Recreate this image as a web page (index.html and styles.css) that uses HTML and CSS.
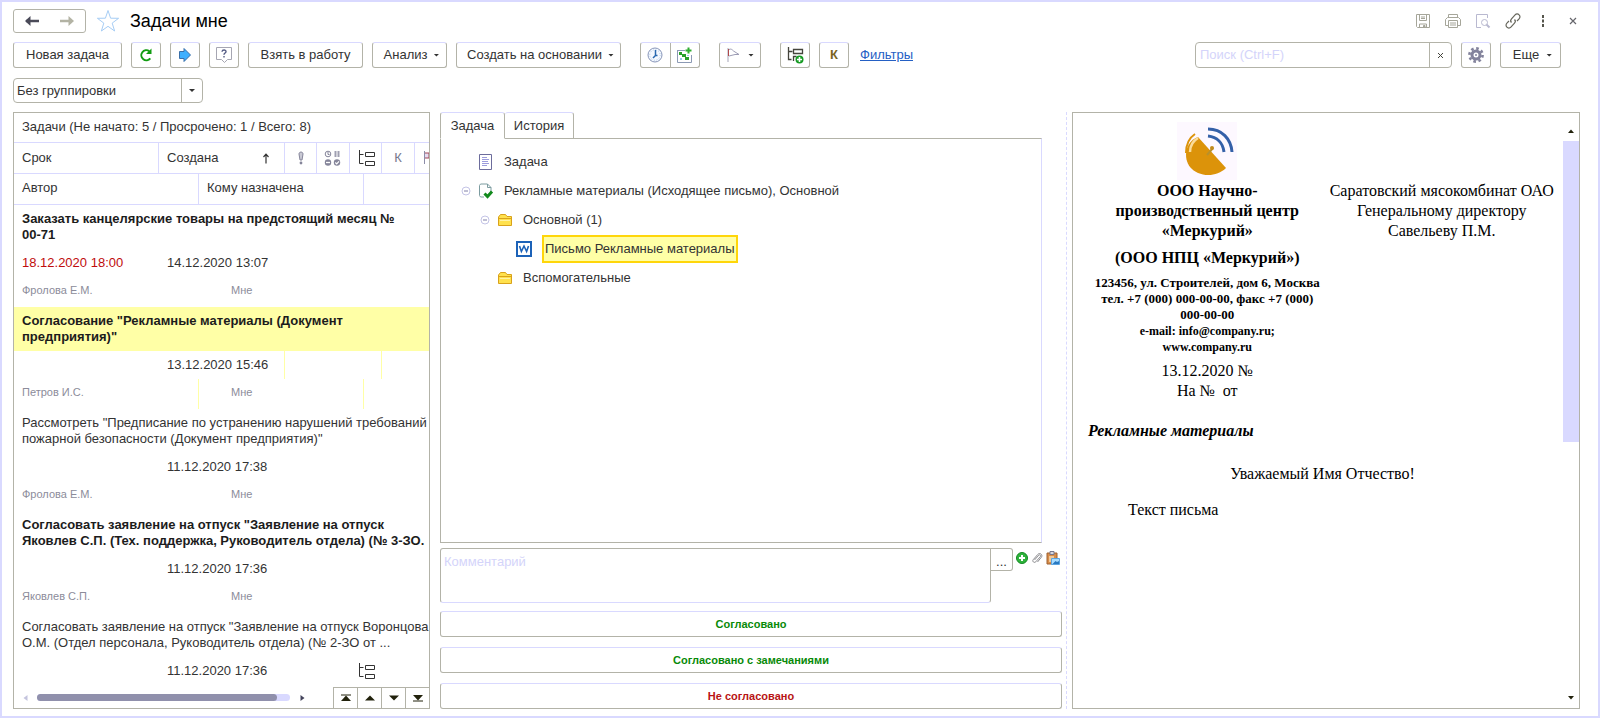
FILE: index.html
```html
<!DOCTYPE html>
<html lang="ru">
<head>
<meta charset="utf-8">
<title>Задачи мне</title>
<link rel="stylesheet" href="styles.css">
</head>
<body>
<svg class="defs" aria-hidden="true">
  <symbol id="i-tree" viewBox="0 0 18 18"><path d="M2.500 1v13.500h4M2.500 5.500h4" fill="none" stroke="currentColor"/><path d="M8.500 3.500h9v4h-9zM8.500 12.500h9v4h-9z" fill="none" stroke="currentColor"/></symbol>
  <symbol id="i-folder" viewBox="0 0 16 16"><path d="M1.500 13.500V5l2-2.500h5L10 4.500h4.500v9z" fill="#ffe14d" stroke="#d9a21b"/><path d="M2 6.500h12" stroke="#d9a21b"/><path d="M3 8.500h10" stroke="#fff3a6"/></symbol>
  <symbol id="i-minus" viewBox="0 0 10 10"><circle cx="5" cy="5" r="4" fill="#fff" stroke="#c4c4e6"/><path d="M3 5h4" stroke="#8080a8"/></symbol>
</svg>
<div class="window">
  <header class="titlebar">
    <div class="nav">
      <button type="button" aria-label="Назад"><svg width="16" height="12" viewBox="0 0 16 12"><path d="M2 6h13" stroke="#4a4a58" stroke-width="2.500"/><path d="M6.500 1 1 6l5.500 5z" fill="#4a4a58"/></svg></button>
      <button type="button" aria-label="Вперед"><svg width="16" height="12" viewBox="0 0 16 12"><path d="M1 6h12" stroke="#b3b3a4" stroke-width="2.500"/><path d="M9.500 1 15 6l-5.500 5z" fill="#b3b3a4"/></svg></button>
    </div>
    <button type="button" class="plain" aria-label="В избранное"><svg width="24" height="24" viewBox="0 0 24 24"><path d="m12 1.500 2.600 7.700 8 .1-6.400 4.800 2.400 7.900-6.600-4.700L5.400 22l2.400-7.900-6.400-4.800 8-.1z" fill="#fff" stroke="#a6cdf5"/></svg></button>
    <h1>Задачи мне</h1>
    <div class="window-tools">
      <button type="button" class="plain" aria-label="Сохранить"><svg width="16" height="16" viewBox="0 0 16 16" fill="none" stroke="#a6a69a"><path d="M1.500 1.500h13v13h-12l-1-1z"/><path d="M4.500 2v5.500h7V2M6 4h4M6 5.500h4M4.500 14v-3h7v3"/><path d="M8.500 12.500h1.500v1.500H8.500z" fill="#a6a69a"/></svg></button>
      <button type="button" class="plain" aria-label="Печать"><svg width="18" height="16" viewBox="0 0 18 16" fill="none" stroke="#a6a69a"><path d="M4.500 4V1.500h9V4M4 12.500H1.500v-6l2-2h11l2 2v6H14"/><path d="M4.500 7.500h9v7h-9zM6 10h6M6 12h6"/></svg></button>
      <button type="button" class="plain" aria-label="Просмотр"><svg width="16" height="16" viewBox="0 0 16 16" fill="none" stroke="#b9b9d0"><path d="M6 14.500H1.500v-13h11V5"/><circle cx="9.500" cy="9.500" r="3"/><path d="m11.500 11.500 3 3" stroke-width="2"/></svg></button>
      <button type="button" class="plain" aria-label="Ссылка"><svg width="18" height="18" viewBox="0 0 18 18" fill="none" stroke="#66665c" stroke-width="1.200"><path d="M7.500 10.500c-1.200-1.200-1-2.600 0-3.700l3.600-3.900c1.200-1.300 2.900-1.200 4 0 1.100 1.100 1.200 2.700 0 3.900L13 9"/><path d="M10.500 7.500c1.200 1.200 1 2.600 0 3.700l-3.600 3.900c-1.200 1.300-2.900 1.200-4 0-1.100-1.100-1.200-2.700 0-3.900L5 9"/></svg></button>
      <button type="button" class="plain dotmenu" aria-label="Меню"><svg width="4" height="12" viewBox="0 0 4 12" fill="#55554c"><path d="M1 0h2v3H1zM1 4.500h2v3H1zM1 9h2v3H1z"/></svg></button>
      <button type="button" class="plain close" aria-label="Закрыть"><svg width="10" height="10" viewBox="0 0 10 10"><path d="m2 2 6 6m0-6-6 6" stroke="#66666c" stroke-width="1.200"/></svg></button>
    </div>
  </header>

  <div class="toolbar">
    <button type="button" class="btn new">Новая задача</button>
    <button type="button" class="btn icon" aria-label="Обновить"><svg width="16" height="16" viewBox="0 0 16 16"><path d="M12.300 11.300A5 5 0 1 1 11.300 4.200" fill="none" stroke="#119c11" stroke-width="2"/><path d="M13.500 1.500V7H8z" fill="#119c11"/></svg></button>
    <button type="button" class="btn icon" aria-label="Перенаправить"><svg width="14" height="16" viewBox="0 0 14 16"><path d="M1.500 4.500H6v-3l6.500 6.500L6 14.500v-3H1.500z" fill="#3fb0ff" stroke="#3a6fa8"/></svg></button>
    <button type="button" class="btn icon" aria-label="Справка"><svg width="18" height="18" viewBox="0 0 18 18"><path d="M1.500 1.500h15v12h-4l-3 3-3-3h-5z" fill="#fff" stroke="#a6a6b2"/><path d="M7 5.700c.2-2.200 4.200-2.200 4 .1-.1 1.300-2 1.300-2 3M9 10v1.600" fill="none" stroke="#555c84" stroke-width="1.400"/></svg></button>
    <button type="button" class="btn take">Взять в работу</button>
    <button type="button" class="btn analysis">Анализ<span class="caret"></span></button>
    <button type="button" class="btn create">Создать на основании<span class="caret"></span></button>
    <div class="pair">
      <button type="button" aria-label="Хронометраж"><svg width="16" height="16" viewBox="0 0 16 16"><circle cx="8" cy="8" r="7" fill="#f4f8ff" stroke="#8795b8"/><circle cx="8" cy="8" r="5.200" fill="none" stroke="#a9c6e6" stroke-dasharray="1 1.700"/><path d="M8.500 3v5.500L6 11M8 8.500h2.500" fill="none" stroke="#2868b0" stroke-width="1.500"/></svg></button>
      <button type="button" aria-label="Добавить в план"><svg width="17" height="16" viewBox="0 0 17 16"><path d="M1 3.500h8M1.500 3v12.500h14V8" fill="none" stroke="#8c9ab4"/><path d="M3 5h3v3H3zM6 7h4v3H6zM9 10h4v3H9z" fill="#2aa02a"/><path d="M4 11h2v2H4zM11 8h2v1h-2z" fill="#9cc8e8"/><path d="M12.500 .5v6M9.500 3.500h6" stroke="#2fae2f" stroke-width="2"/></svg></button>
    </div>
    <button type="button" class="btn flag" aria-label="Флаг"><svg width="14" height="16" viewBox="0 0 14 16"><path d="M2 1v14" stroke="#a5a5b8"/><path d="M3 2.500c2-1 3 0 4.500 1.500L13 7.500H9L3 9" fill="#fff" stroke="#9c9cb4"/><path d="M2.500 2v7" stroke="#b04a4a"/></svg><span class="caret"></span></button>
    <button type="button" class="btn icon tree-add" aria-label="Добавить подзадачу"><svg width="18" height="18" viewBox="0 0 18 18"><path d="M2.500 1v12.500h3M2.500 5.500h4" stroke="#44443c" fill="none" stroke-width="1.300"/><path d="M7.500 3.500h9v4h-9zM7.500 15v-4.500h3" fill="none" stroke="#44443c" stroke-width="1.300"/><circle cx="13.500" cy="13.500" r="4" fill="#169b23"/><path d="M13.500 11v5M11 13.500h5" stroke="#fff" stroke-width="1.600"/></svg></button>
    <button type="button" class="btn icon control">К</button>
    <a class="filters" href="#filters">Фильтры</a>
    <div class="search">
      <input type="text" aria-label="Поиск" placeholder="Поиск (Ctrl+F)">
      <button type="button" aria-label="Очистить"><svg width="7" height="7" viewBox="0 0 7 7"><path d="m1 1 5 5m0-5L1 6" stroke="#44443c"/></svg></button>
    </div>
    <button type="button" class="btn icon" aria-label="Настройки"><svg width="16" height="16" viewBox="0 0 16 16"><circle cx="8" cy="8" r="4" fill="none" stroke="#83839c" stroke-width="3"/><circle cx="8" cy="8" r="6.600" fill="none" stroke="#83839c" stroke-width="2.600" stroke-dasharray="2.600 2.580"/><circle cx="8" cy="8" r="1" fill="#83839c"/></svg></button>
    <button type="button" class="btn more">Еще<span class="caret"></span></button>
  </div>

  <div class="grouping">
    <select aria-label="Группировка"><option>Без группировки</option></select>
    <span class="drop"><span class="caret"></span></span>
  </div>

  <main class="panes">
    <section class="tasks">
      <h2>Задачи (Не начато: 5 / Просрочено: 1 / Всего: 8)</h2>
      <div class="table-view">
        <table>
          <colgroup><col class="c145"><col class="c40"><col class="c86"><col class="c32"><col class="c33"><col class="c14"><col class="c18"><col class="c33"><col></colgroup>
          <thead>
            <tr>
              <th>Срок</th>
              <th colspan="2"><span class="sort">Создана <svg width="8" height="11" viewBox="0 0 8 11"><path d="M4 1v9.500M1.500 4 4 1.200 6.500 4" fill="none" stroke="#333" stroke-width="1.200"/></svg></span></th>
              <th class="mid"><svg width="8" height="14" viewBox="0 0 8 14" aria-label="Важность"><path d="M2 3c0-2.600 4-2.600 4 0L5 9H3z" fill="#c9c9d4" stroke="#85859a"/><circle cx="4" cy="12" r="1.400" fill="#85859a"/></svg></th>
              <th class="mid"><svg width="18" height="16" viewBox="0 0 18 16" aria-label="Состояние"><circle cx="4" cy="4" r="2.800" fill="none" stroke="#85859a"/><path d="M4 2v2.500h1.500" fill="none" stroke="#85859a"/><path d="M11.500 1v6M14.500 1v6" stroke="#a0a0b2" stroke-width="2"/><circle cx="4" cy="12.500" r="3.200" fill="#85859a"/><path d="M2 12.500h4" stroke="#fff" stroke-width="1.300"/><circle cx="13" cy="12.500" r="3.200" fill="#85859a"/><path d="m11.300 12.500 1.400 1.400 2.300-2.600" fill="none" stroke="#fff" stroke-width="1.200"/></svg></th>
              <th class="mid" colspan="2"><svg width="18" height="18" aria-label="Подзадачи"><use href="#i-tree"/></svg></th>
              <th class="mid k">К</th>
              <th class="flagcol"><svg width="14" height="16" viewBox="0 0 14 16" aria-label="Флаг"><path d="M1.500 1v13" stroke="#8c8ca8"/><path d="M2 3h4v5H2" fill="#e6dcf0" stroke="#a04858"/></svg></th>
            </tr>
            <tr><th colspan="2">Автор</th><th colspan="4">Кому назначена</th><th colspan="3"></th></tr>
          </thead>
          <tbody class="unread">
            <tr class="name"><td colspan="9">Заказать канцелярские товары на предстоящий месяц №<br>00-71</td></tr>
            <tr class="dates"><td class="late">18.12.2020 18:00</td><td colspan="2">14.12.2020 13:07</td><td></td><td></td><td colspan="2"></td><td></td><td></td></tr>
            <tr class="people"><td colspan="2">Фролова Е.М.</td><td colspan="4" class="to">Мне</td><td colspan="3"></td></tr>
          </tbody>
          <tbody class="unread selected">
            <tr class="name"><td colspan="9">Согласование "Рекламные материалы (Документ<br>предприятия)"</td></tr>
            <tr class="dates"><td></td><td colspan="2">13.12.2020 15:46</td><td></td><td></td><td colspan="2"></td><td></td><td></td></tr>
            <tr class="people"><td colspan="2">Петров И.С.</td><td colspan="4" class="to">Мне</td><td colspan="3"></td></tr>
          </tbody>
          <tbody>
            <tr class="name"><td colspan="9">Рассмотреть "Предписание по устранению нарушений требований<br>пожарной безопасности (Документ предприятия)"</td></tr>
            <tr class="dates"><td></td><td colspan="2">11.12.2020 17:38</td><td></td><td></td><td colspan="2"></td><td></td><td></td></tr>
            <tr class="people"><td colspan="2">Фролова Е.М.</td><td colspan="4" class="to">Мне</td><td colspan="3"></td></tr>
          </tbody>
          <tbody class="unread">
            <tr class="name"><td colspan="9">Согласовать заявление на отпуск "Заявление на отпуск<br>Яковлев С.П. (Тех. поддержка, Руководитель отдела) (№ 3-ЗО.</td></tr>
            <tr class="dates"><td></td><td colspan="2">11.12.2020 17:36</td><td></td><td></td><td colspan="2"></td><td></td><td></td></tr>
            <tr class="people"><td colspan="2">Яковлев С.П.</td><td colspan="4" class="to">Мне</td><td colspan="3"></td></tr>
          </tbody>
          <tbody>
            <tr class="name"><td colspan="9">Согласовать заявление на отпуск "Заявление на отпуск Воронцова<br>О.М. (Отдел персонала, Руководитель отдела) (№ 2-ЗО от ...</td></tr>
            <tr class="dates"><td></td><td colspan="2">11.12.2020 17:36</td><td></td><td></td><td colspan="2" class="mid"><svg width="18" height="18"><use href="#i-tree"/></svg></td><td></td><td></td></tr>
          </tbody>
        </table>
      </div>
      <div class="list-foot">
        <svg width="5" height="6" viewBox="0 0 5 6"><path d="M4.500 0v6L.5 3z" fill="#c4c4de"/></svg>
        <div class="hbar"><div class="hthumb"></div></div>
        <svg width="5" height="6" viewBox="0 0 5 6"><path d="M.5 0v6l4-3z" fill="#44445c"/></svg>
        <div class="jump">
          <button type="button" aria-label="В начало"><svg width="10" height="8" viewBox="0 0 10 8"><path d="M0 7h10L5 1.500z" fill="#22220c"/><path d="M0 1h10" stroke="#22220c"/></svg></button>
          <button type="button" aria-label="Вверх"><svg width="10" height="6" viewBox="0 0 10 6"><path d="M0 5.500h10L5 .5z" fill="#22220c"/></svg></button>
          <button type="button" aria-label="Вниз"><svg width="10" height="6" viewBox="0 0 10 6"><path d="M0 .5h10l-5 5z" fill="#22220c"/></svg></button>
          <button type="button" aria-label="В конец"><svg width="10" height="8" viewBox="0 0 10 8"><path d="M0 1h10L5 6.500z" fill="#22220c"/><path d="M0 7h10" stroke="#22220c"/></svg></button>
        </div>
      </div>
    </section>

    <section class="detail">
      <div class="tabs" role="tablist">
        <button type="button" role="tab" aria-selected="true" class="tab active">Задача</button>
        <button type="button" role="tab" aria-selected="false" class="tab">История</button>
      </div>
      <ul class="files">
        <li class="l1"><span class="toggle"></span><svg width="16" height="16" viewBox="0 0 16 16"><path d="M1.500.5h12v15h-12z" fill="#fff" stroke="#6c6c9c"/><path d="M4 3.500h5M4 5.500h7M4 7.500h6M4 9.500h7M4 11.500h5" stroke="#9c9cdc"/></svg><span>Задача</span></li>
        <li class="l1"><span class="toggle"><svg width="10" height="10"><use href="#i-minus"/></svg></span><svg width="16" height="16" viewBox="0 0 16 16"><path d="M1.500 12.500v-10l1-1.500h7l3.500 3.500v5M1.500 12.500l1 1.500H6" fill="#fff" stroke="#7c9ca0"/><path d="M9.500 1v3.500H13" fill="none" stroke="#7c9ca0"/><path d="m6.500 10.500 3 3L14 8.500" fill="none" stroke="#128a1c" stroke-width="3"/></svg><span>Рекламные материалы (Исходящее письмо), Основной</span></li>
        <li class="l2"><span class="toggle"><svg width="10" height="10"><use href="#i-minus"/></svg></span><svg width="16" height="16"><use href="#i-folder"/></svg><span>Основной (1)</span></li>
        <li class="l3"><span class="toggle"></span><svg width="16" height="16" viewBox="0 0 16 16"><path d="M1 1h14v14H1z" fill="#fff" stroke="#1c62b8" stroke-width="2"/><path d="M3.500 5 5.400 10.500 8 5l2.600 5.500L12.500 5" fill="none" stroke="#1c62b8" stroke-width="1.600"/></svg><span class="picked">Письмо Рекламные материалы</span></li>
        <li class="l2"><span class="toggle"></span><svg width="16" height="16"><use href="#i-folder"/></svg><span>Вспомогательные</span></li>
      </ul>
      <div class="comment">
        <textarea aria-label="Комментарий" placeholder="Комментарий"></textarea>
        <button type="button" class="dots" aria-label="Выбрать">...</button>
        <button type="button" class="plain" aria-label="Добавить"><svg width="12" height="12" viewBox="0 0 12 12"><circle cx="6" cy="6" r="5.500" fill="#2fb33c" stroke="#148a24"/><path d="M6 3v6M3 6h6" stroke="#fff" stroke-width="2"/></svg></button>
        <button type="button" class="plain" aria-label="Прикрепить"><svg width="12" height="12" viewBox="0 0 12 12" fill="none" stroke="#8c8c90"><path d="m3.500 8 4.300-4.800c1-1 2.600.3 1.600 1.400L4.800 9.800C3.300 11.400.8 9.400 2.200 7.700l4.600-5.300c2-2.300 5.400.4 3.600 2.800L6.500 10"/></svg></button>
        <button type="button" class="plain" aria-label="Вставить"><svg width="14" height="14" viewBox="0 0 14 14"><path d="M1 2h10v11H1z" fill="#d88c48" stroke="#9c6030"/><path d="M4 .5h4v3H4z" fill="#d8d8e0" stroke="#77778c"/><path d="M3 5h5v6H3z" fill="#f0c898"/><path d="M5.500 7.500h8v6h-8z" fill="#a8dcff" stroke="#5ca4e0"/><path d="m6.500 13 3-3 1.500 1 2-1v3z" fill="#2878c0"/></svg></button>
      </div>
      <div class="verdicts">
        <button type="button" class="yes">Согласовано</button>
        <button type="button" class="yes">Согласовано с замечаниями</button>
        <button type="button" class="no">Не согласовано</button>
      </div>
    </section>

    <section class="preview-pane">
      <div class="preview">
        <article class="letter">
          <div class="letter-head">
            <div class="sender">
              <svg width="62" height="60" viewBox="0 0 62 60"><path d="M1 1h60v58H1z" fill="#fdf8ff"/><path d="M22 16C9 21 7 37 14 46c8 10 26 11 36 1z" fill="#dc930a"/><path d="M19 13c-6 4-9 11-9 19" fill="none" stroke="#dc930a" stroke-width="2"/><path d="M22 17c-5 3-8 8-8 14" fill="none" stroke="#fbdc9a" stroke-width="2.500"/><path d="m31 34 6-7" stroke="#b8902c" stroke-width="2"/><circle cx="36" cy="27" r="2" fill="#c08a1c"/><path d="M32 15c9 1 15 7 16 16M32 8c14 0 23 10 24 23" fill="none" stroke="#3460a8" stroke-width="3"/></svg>
              <p class="org">ООО Научно-<br>производственный центр<br>«Меркурий»</p>
              <p class="org">(ООО НПЦ «Меркурий»)</p>
              <p class="address">123456, ул. Строителей, дом 6, Москва<br>тел. +7 (000) 000-00-00, факс +7 (000)<br>000-00-00</p>
              <p class="mail">e-mail: info@company.ru;<br>www.company.ru</p>
              <p class="reg">13.12.2020 №<br>На №&nbsp; от</p>
            </div>
            <p class="recipient">Саратовский мясокомбинат ОАО<br>Генеральному директору<br>Савельеву П.М.</p>
          </div>
          <p class="subject">Рекламные материалы</p>
          <p class="greeting">Уважаемый Имя Отчество!</p>
          <p class="text">Текст письма</p>
        </article>
        <div class="vscroll">
          <span class="arrow"><svg width="6" height="4" viewBox="0 0 6 4"><path d="M0 4h6L3 .5z" fill="#22220c"/></svg></span>
          <div class="vtrack"><div class="vthumb"></div></div>
          <span class="arrow"><svg width="6" height="4" viewBox="0 0 6 4"><path d="M0 0h6L3 3.500z" fill="#22220c"/></svg></span>
        </div>
      </div>
    </section>
  </main>
</div>
</body>
</html>
```
FILE: styles.css
```css
:root {
  --line: #b3b3a8;
  --soft: #d9d9ff;
  --ink: #333333;
}
* { box-sizing: border-box; }
body { margin: 0; background: #fff; color: var(--ink); font: 13px/16px "Liberation Sans", Arial, sans-serif; }
button, input, select, textarea { font: inherit; color: inherit; margin: 0; }
button { background: #fff; border: 0; padding: 0; display: flex; align-items: center; justify-content: center; }
h1, h2, p, ul { margin: 0; padding: 0; font-weight: normal; }
svg { display: block; flex: none; }
.defs { position: absolute; width: 0; height: 0; }

.window { display: flex; flex-direction: column; min-height: 100vh; border: 2px solid var(--soft); padding: 7px 18px 7px 11px; }

.titlebar { display: flex; align-items: center; height: 24px; margin-bottom: 9px; }
.nav { display: flex; width: 73px; height: 24px; border: 1px solid var(--line); border-radius: 3px; margin-right: 10px; }
.nav button { flex: 1; background: none; }
.titlebar h1 { font-size: 18px; line-height: 24px; color: #000; margin-left: 10px; }
.plain { background: none; }
.window-tools { display: flex; align-items: center; gap: 13px; margin-left: auto; padding-right: 2px; }
.dotmenu { margin-left: 6px; }
.close { margin-left: 10px; }

.toolbar { display: flex; align-items: center; height: 26px; gap: 9px; margin-bottom: 10px; padding-right: 19px; white-space: nowrap; }
.btn { height: 26px; border: 1px solid var(--line); border-top-color: var(--soft); border-radius: 3px; flex: none; }
.btn.icon { width: 30px; }
.new { width: 109px; }
.take { width: 115px; }
.analysis { width: 75px; gap: 6px; padding-left: 4px; }
.create { width: 165px; gap: 6px; padding-left: 4px; }
.flag { width: 42px; gap: 8px; margin-right: 10px; }
.more { width: 61px; gap: 7px; padding-left: 4px; }
.control { color: #7a6420; font-weight: bold; }
.caret { width: 6px; height: 3px; background: #333; clip-path: polygon(0 0, 100% 0, 50% 100%); }
.pair { display: flex; width: 60px; height: 26px; border: 1px solid var(--line); border-top-color: var(--soft); border-radius: 3px; margin: 0 10px; }
.pair button { flex: 1; background: none; }
.pair button + button { border-left: 1px solid var(--line); }
.filters { color: #2460c4; margin-left: 2px; }
.search { display: flex; width: 257px; height: 26px; border: 1px solid var(--line); border-radius: 4px; margin-left: auto; }
.search input { flex: 1; min-width: 0; border: 0; padding: 0 4px; background: none; outline: 0; }
.search button { width: 22px; border-left: 1px solid var(--line); background: none; }
::placeholder { color: #d4d4fa; opacity: 1; }

.grouping { position: relative; width: 190px; height: 25px; border: 1px solid var(--line); border-radius: 4px; margin-bottom: 9px; }
.grouping select { width: 100%; height: 100%; border: 0; padding: 0 24px 0 3px; background: none; appearance: none; outline: 0; }
.drop { position: absolute; top: 0; right: 0; bottom: 0; width: 21px; border-left: 1px solid var(--line); display: flex; align-items: center; justify-content: center; pointer-events: none; }

.panes { flex: 1; display: grid; grid-template-columns: minmax(0, 417fr) minmax(0, 636fr) minmax(0, 514fr); }

.tasks { display: flex; flex-direction: column; border: 1px solid var(--line); min-width: 0; }
.tasks h2 { font-size: 13px; line-height: 28px; height: 29px; padding-left: 8px; white-space: nowrap; }
.table-view { flex: 1; overflow: hidden; }
table { width: 100%; border-collapse: separate; border-spacing: 0; table-layout: fixed; }
.c145 { width: 145px; }
.c40 { width: 40px; }
.c86 { width: 86px; }
.c32 { width: 32px; }
.c33 { width: 33px; }
.c14 { width: 14px; }
.c18 { width: 18px; }
th, td { padding: 0 0 0 8px; text-align: left; font-weight: normal; white-space: nowrap; }
th { height: 31px; border-top: 1px solid var(--soft); border-right: 1px solid var(--soft); }
tr > th:last-child { border-right: 0; }
thead tr:last-child th { height: 32px; padding-bottom: 2px; border-bottom: 1px solid var(--soft); }
.sort { display: flex; align-items: center; justify-content: space-between; padding-right: 14px; }
th.mid, td.mid { padding: 0; text-align: center; }
.mid svg { margin: 0 auto; }
th.k { color: #77778c; }
th.flagcol { padding-left: 8px; overflow: hidden; }
.name td { height: 44px; vertical-align: top; padding-top: 6px; }
.unread .name td { font-weight: bold; color: #1c1c1c; }
.dates td { height: 28px; }
.dates .late { color: #c00c0c; }
.people td { height: 30px; padding-bottom: 4px; font-size: 11px; color: #8c8c9a; }
.people td.to { padding-left: 32px; }
.selected .name td { background: #ffffa6; }
.selected .dates td:nth-child(2), .selected .dates td:nth-child(5), .selected .people td:not(:last-child) { border-right: 1px solid #ffffa6; }

.list-foot { display: flex; align-items: center; height: 21px; padding-left: 9px; }
.hbar { flex: 1; height: 7px; margin: 0 10px 0 9px; border-radius: 4px; background: var(--soft); }
.hthumb { width: 95%; height: 7px; border-radius: 4px; background: #9090ac; }
.jump { display: flex; margin-left: 28px; height: 21px; border-top: 1px solid var(--line); }
.jump button { width: 24px; border-left: 1px solid var(--line); }

.detail { display: flex; flex-direction: column; padding: 0 4px 0 10px; min-width: 0; }
.tabs { display: flex; height: 27px; margin-bottom: -1px; }
.tab { width: 69px; border: 1px solid var(--line); border-top-color: var(--soft); border-left: 0; border-radius: 3px 3px 0 0; }
.tab.active { width: 65px; border-left: 1px solid var(--line); border-bottom-color: #fff; position: relative; }
.files { flex: 1; list-style: none; border: 1px solid var(--line); border-right-color: var(--soft); margin-right: 20px; padding-top: 8px; }
.files li { display: flex; align-items: center; height: 29px; white-space: nowrap; }
.toggle { width: 10px; margin-right: 7px; }
.files li > span:last-child { margin-left: 10px; }
.l1 { padding-left: 20px; }
.l2 { padding-left: 39px; }
.l3 { padding-left: 58px; }
.files li > .picked { margin-left: 4px; border: 2px solid #ffd60a; background: #ffffa6; padding: 4px 1px; }

.comment { display: flex; align-items: flex-start; margin-top: 5px; }
.comment textarea { flex: 1; min-width: 0; height: 55px; border: 1px solid var(--line); border-bottom-color: var(--soft); border-radius: 3px 0 3px 3px; padding: 5px 3px; resize: none; outline: 0; display: block; }
.dots { width: 22px; height: 23px; border: 1px solid var(--line); border-left: 0; border-radius: 0 3px 3px 0; padding-top: 4px; }
.comment .plain { height: 20px; margin-left: 3px; }
.comment .plain:last-child { margin-right: 2px; }
.verdicts { display: flex; flex-direction: column; gap: 10px; margin-top: 8px; }
.verdicts button { height: 26px; border: 1px solid var(--line); border-top-color: var(--soft); border-radius: 3px; font-size: 11px; font-weight: bold; }
.yes { color: #088a08; }
.no { color: #b81414; }

.preview-pane { display: flex; border-left: 1px dashed var(--soft); padding-left: 5px; min-width: 0; }
.preview { flex: 1; display: flex; border: 1px solid var(--line); min-width: 0; }
.letter { flex: 1; padding: 8px 6px 0 15px; font: 16px/20px "Liberation Serif", "Times New Roman", serif; color: #000; }
.letter-head { display: grid; grid-template-columns: 238fr 230fr; text-align: center; white-space: nowrap; }
.sender svg { margin: 0 auto; }
.org { font-weight: bold; margin-bottom: 7px; }
.address { font-size: 13px; line-height: 16px; font-weight: bold; }
.mail { font-size: 12px; line-height: 16px; font-weight: bold; margin-bottom: 6px; }
.recipient { padding-top: 60px; }
.subject { font-weight: bold; font-style: italic; margin-top: 20px; }
.greeting { text-align: center; margin-top: 23px; }
.text { margin-top: 16px; padding-left: 40px; }
.vscroll { width: 16px; display: flex; flex-direction: column; padding-top: 8px; }
.arrow { height: 20px; display: flex; align-items: center; justify-content: center; }
.vtrack { flex: 1; }
.vthumb { height: 55%; background: var(--soft); }
```
